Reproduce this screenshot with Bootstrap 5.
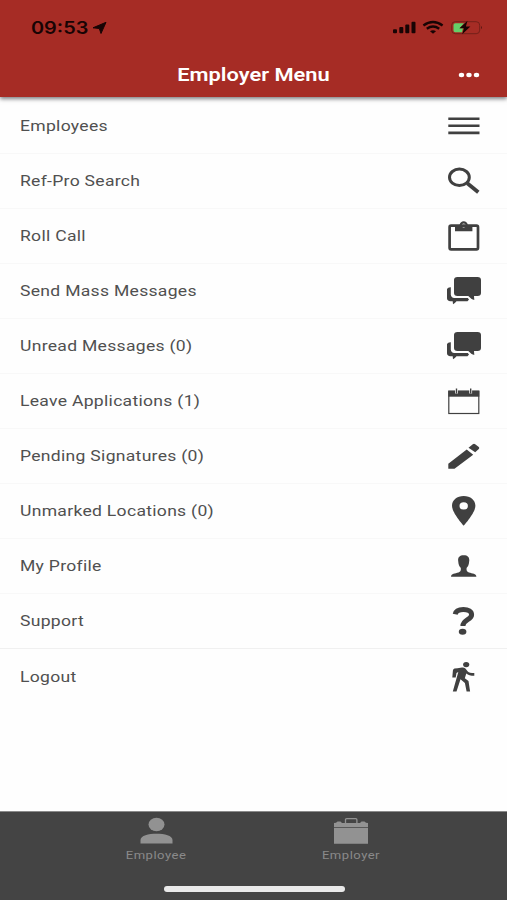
<!DOCTYPE html>
<html lang="en">
<head>
<meta charset="utf-8">
<meta name="viewport" content="width=device-width, initial-scale=1">
<title>Employer Menu</title>
<link href="https://cdn.jsdelivr.net/npm/bootstrap@5.3.0/dist/css/bootstrap.min.css" rel="stylesheet">
<style>
body{font-family:Roboto,"Liberation Sans",sans-serif;background:#fefefe;overflow:hidden}
.app-head{height:97px;background:#a62c25;box-shadow:0 2px 4px rgba(0,0,10,.5);z-index:1}
.status-row{height:55px;padding:0 25px 0 31px}
.clock{font:600 17px Inter,sans-serif;color:#180404;transform:scaleX(1.17);transform-origin:left;width:61px}
.title-row{height:39px;display:grid;grid-template-columns:60px 1fr 60px;padding:0 8px}
.title-text{font-size:18.3px;font-weight:600;transform:scaleX(1.195);margin:0}
.menu-list{padding-top:2px}
.menu-list .list-group-item{height:55px;padding:0 24px 0 20px;border-color:#f8f8f8;background:transparent;color:#505050}
.menu-list .list-group-item:nth-child(10){border-color:#f0f0f0}
.row-label{font-size:15px;transform:scaleX(1.17);transform-origin:left;letter-spacing:.25px;line-height:20px}
.row-icon{width:40px;height:40px;fill:#404040;stroke:#404040;stroke-width:0}
.tab-bar{height:89px;background:#444;border-top:1px solid #8a8a8a;color:#8c8c8c}
.tab-item{width:90px;padding-top:4px}
.tab-item svg{width:40px;height:30px;fill:#929292}
.tab-text{font-size:10.8px;line-height:14px;transform:scaleX(1.21);letter-spacing:.4px;color:#8a8a8a;margin-top:3px}
.tabs-inner{padding:0 111px}
.home-bar{width:181px;height:6px;background:#e9e9e9;margin:0 0 8px 163.5px}
</style>
<script src="https://cdn.jsdelivr.net/npm/bootstrap@5.3.0/dist/js/bootstrap.bundle.min.js"></script>
</head>
<body class="vh-100 d-flex flex-column">
<header class="app-head flex-shrink-0 position-relative">
  <div class="status-row d-flex align-items-center">
    <span class="clock">09:53</span>
    <svg width="15" height="14" viewBox="0 0 15 14"><path d="M1 6.800 14 1.300 9 12.500 7.300 7.500z" fill="#180404" stroke="#180404" stroke-width="1" stroke-linejoin="round"/></svg>
    <svg class="ms-auto" width="92" height="16" viewBox="0 0 92 16">
      <g fill="#180404"><rect x="3" y="9.3" width="4" height="4" rx="1"/><rect x="9.3" y="7" width="4" height="6.3" rx="1"/><rect x="15.3" y="4.5" width="4" height="8.8" rx="1"/><rect x="21.5" y="1.8" width="4" height="11.5" rx="1"/><path d="M43 13.7l-3-2.5q3-2 6 0z"/></g>
      <g fill="none" stroke="#180404" stroke-width="2.4"><path d="M33.4 5.5q9.6-7 19.2 0"/><path d="M36.8 8.800q6.200-4.400 12.400 0"/></g>
      <rect x="61.700" y="1.700" width="28" height="12" rx="3.500" fill="none" stroke="#742019" stroke-width="1"/>
      <path d="M91 6q2 1.600 0 3.200z" fill="#5a1712"/>
      <path d="M65.300 3.200H74l-4.500 5H73l-1 4h-6.700q-1.800 0-1.800-1.800V5q0-1.800 1.800-1.800z" fill="#65cf68"/>
      <path d="M77.500.8l-8 7.500h4.500l-1.800 5.900 8.200-7.700h-4.500z" fill="#180404"/>
    </svg>
  </div>
  <div class="title-row align-items-center">
    <h1 class="title-text text-white text-center" style="grid-column:2">Employer Menu</h1>
    <svg width="24" height="8" viewBox="0 0 24 8" fill="#fff" aria-label="More" style="margin-left:17.5px"><ellipse cx="4.500" cy="4" rx="2.700" ry="2.200"/><ellipse cx="12" cy="4" rx="2.700" ry="2.200"/><ellipse cx="19.500" cy="4" rx="2.700" ry="2.200"/></svg>
  </div>
</header>

<main class="flex-grow-1">
<ul class="menu-list list-group list-group-flush">
  <li class="list-group-item d-flex justify-content-between align-items-center"><span class="row-label">Employees</span>
    <svg class="row-icon" viewBox="0 0 40 40"><path d="M5.300 11.400h31.200v2.700H5.300zM5.300 18.400h31.200v2.700H5.300zM5.300 25.500h31.200v2.700H5.300z"/></svg></li>
  <li class="list-group-item d-flex justify-content-between align-items-center"><span class="row-label">Ref-Pro Search</span>
    <svg class="row-icon" viewBox="0 0 40 40"><ellipse cx="16.400" cy="16.300" rx="9.900" ry="8.200" fill="none" stroke-width="3"/><path d="M24.300 22.300l11 9" stroke-width="3.800"/></svg></li>
  <li class="list-group-item d-flex justify-content-between align-items-center"><span class="row-label">Roll Call</span>
    <svg class="row-icon" viewBox="0 0 40 40"><rect x="6.600" y="9.700" width="28.400" height="23.600" rx="1.500" fill="none" stroke-width="2.700"/><path fill-rule="evenodd" d="M12 9h4.500q1-3.700 4.200-3.700T24.900 9h4.500v6.300H12zM22.900 9.500a2.200 1.900 0 1 0-4.400 0 2.200 1.900 0 1 0 4.400 0z"/></svg></li>
  <li class="list-group-item d-flex justify-content-between align-items-center"><span class="row-label">Send Mass Messages</span>
    <svg class="row-icon" viewBox="0 0 40 40"><path id="chat" d="M14.500 6h20q3.500 0 3.500 3v13q0 3-3.500 3H31l.3 4q-3.300-.8-6-4H14.500q-3.500 0-3.500-3V9q0-3 3.500-3zM4 18q1-2 3.800-1.800v7.500q.4 3 3.400 3.300h13.600l1.200 1.500-1.500 1.700H13.500q-1.500 1.800-3.500 3l-.3-3H7.500q-3.500-.3-3.500-3z"/></svg></li>
  <li class="list-group-item d-flex justify-content-between align-items-center"><span class="row-label">Unread Messages (0)</span>
    <svg class="row-icon" viewBox="0 0 40 40"><use href="#chat"/></svg></li>
  <li class="list-group-item d-flex justify-content-between align-items-center"><span class="row-label">Leave Applications (1)</span>
    <svg class="row-icon" viewBox="0 0 40 40"><rect x="5.800" y="10.200" width="30" height="22.300" fill="none" stroke-width="1.200"/><path d="M5.300 9.700h31v6h-31z"/><path d="M13.500 9v3.500M27.700 9v3.500" stroke="#fff" stroke-width="2.800"/><path d="M13.500 7.500v5M27.700 7.500v5" stroke-width="1.400"/></svg></li>
  <li class="list-group-item d-flex justify-content-between align-items-center"><span class="row-label">Pending Signatures (0)</span>
    <svg class="row-icon" viewBox="0 0 40 40"><path d="M5.300 32.700v-5L23.700 13.500l6.500 5.200-18.700 14zM25.500 11.700l4.300-3.500q1.200-.9 2.400 0l3.600 2.900q1 .9 0 1.900l-3.600 3.300z"/></svg></li>
  <li class="list-group-item d-flex justify-content-between align-items-center"><span class="row-label">Unmarked Locations (0)</span>
    <svg class="row-icon" viewBox="0 0 40 40"><path fill-rule="evenodd" d="M20.700 5C14 5 9 9.200 9 14.700 9 22 20.700 34.700 20.700 34.700S32.400 22 32.400 14.700C32.400 9.200 27.400 5 20.700 5zM24.900 14.900a4.200 3.600 0 1 0-8.400 0 4.200 3.600 0 1 0 8.400 0z"/></svg></li>
  <li class="list-group-item d-flex justify-content-between align-items-center"><span class="row-label">My Profile</span>
    <svg class="row-icon" viewBox="0 0 40 40"><path d="M20.700 9.300c-4 0-5.700 2-5.600 5l.4 3.200c.5 2.600 1.700 3.600 2.300 4.500.3 2.400-.3 3.800-2.300 4.500-3.500 1.100-7.200.7-7.500 4.300h25.400c-.3-3.600-4-3.200-7.500-4.300-2-.7-2.600-2.100-2.300-4.500.6-.9 1.800-1.900 2.300-4.500l.4-3.200c.1-3-1.600-5-5.600-5z"/></svg></li>
  <li class="list-group-item d-flex justify-content-between align-items-center"><span class="row-label">Support</span>
    <svg class="row-icon" viewBox="0 0 40 40"><path d="M12.200 13.300c.6-3.200 3.800-4.800 8.200-4.800 5 0 8.200 1.900 8.200 5.200 0 5.300-8.700 4.800-8.700 11.300" fill="none" stroke-width="5"/><ellipse cx="19.600" cy="30.800" rx="3.800" ry="3"/></svg></li>
  <li class="list-group-item d-flex justify-content-between align-items-center"><span class="row-label">Logout</span>
    <svg class="row-icon" viewBox="0 0 40 40"><ellipse cx="23.200" cy="7.600" rx="3.100" ry="2.600"/><path d="M14.500 11.200l4.500-.8q2.200-.2 3.400 1.200l2.400 2.900q1.500 1.500 6.500 1.500v2.800q-5.500 0-8-2.400l-1.500 4.800 3.700 2.900 1.600 10.400h-3.500l-1.700-8.500-4.400-3.700-4 12.200H9.800l5.500-19.400-1.800.9-.8 4.500H9.300l.6-7q.2-1.500 1.600-1.900z"/></svg></li>
</ul>
</main>

<footer class="tab-bar flex-shrink-0 d-flex flex-column">
  <nav class="tabs-inner d-flex justify-content-between">
    <div class="tab-item d-flex flex-column align-items-center">
      <svg viewBox="0 0 40 30"><ellipse cx="20.500" cy="8.500" rx="8" ry="6.700"/><path d="M4.500 27.500V24c0-4.500 8-6.300 16-6.300s16 1.800 16 6.300v3.500z"/></svg>
      <span class="tab-text">Employee</span>
    </div>
    <div class="tab-item d-flex flex-column align-items-center">
      <svg viewBox="0 0 40 30"><path d="M3 11.800h34v15.900H3zM3 7l2-.2 1.500-1.300h3L11 7h18l1.500-1.500h3L35 6.800l2 .2v4H3z"/><path d="M14.500 7V3.800q0-1.200 1.200-1.200h9q1.200 0 1.200 1.200V7" fill="none" stroke="#929292" stroke-width="1.300"/></svg>
      <span class="tab-text">Employer</span>
    </div>
  </nav>
  <div class="home-bar rounded-pill mt-auto"></div>
</footer>
</body>
</html>
